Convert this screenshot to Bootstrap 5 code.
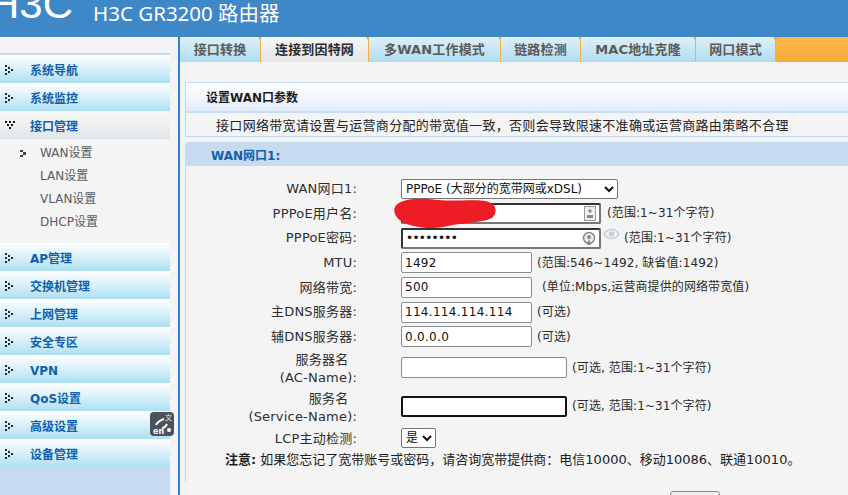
<!DOCTYPE html>
<html lang="zh-CN">
<head>
<meta charset="utf-8">
<title>H3C GR3200</title>
<link href="https://cdn.jsdelivr.net/npm/bootstrap@5.3.0/dist/css/bootstrap.min.css" rel="stylesheet">
<style>
html,body{height:495px;overflow:hidden}
body{background:#f4f4f4;font-family:"DejaVu Sans","Noto Sans CJK SC",sans-serif;font-size:12px;color:#222;position:relative;line-height:1.2}
.topbar{height:37px;background:#3f88c8;color:#fff;overflow:hidden}
.logo-mark{font-family:"Liberation Sans",sans-serif;font-size:40px;line-height:37px;width:84px;margin-left:-11px;margin-top:-14px;transform:scaleX(1.05);transform-origin:left top;font-weight:400}
.product{font-family:"Noto Sans","Noto Sans CJK SC",sans-serif;font-size:20.5px;line-height:25px;margin-top:1px}
.mainrow{height:458px}
.sidebar{width:170px;margin-top:16px;background:#c6dbf0;border-top:2px solid #c6dbf0;height:442px;flex:none}
.menuhead{height:28px;padding-top:4px;background:linear-gradient(#fff,#e4f5fb 35%,#aedff3);color:#0f5fae;font-weight:700;padding-left:30px}
.menuhead.is-open{background:linear-gradient(#f6f6f6,#f0f1f2 45%,#dfe5e9)}
.arrow-ico{position:absolute;left:5px;top:10px}
.sublist{height:104px;background:#f4f4f4;padding:3px 0 0 40px;color:#555c66}
.subitem{height:23px}
.cur-ico{position:absolute;left:-20px;top:8px}
.contentarea{margin-left:8px;border-left:2px solid #2f7fd0;min-width:0}
.tabstrip{height:25px;background:linear-gradient(#fbb84f,#f9ab36)}
.tabitem{background:linear-gradient(#dff0f8,#aedcf0);font-weight:700;color:#5a5a5a;font-size:13px;letter-spacing:.15px;position:relative;border-right:1px solid #f6ad3f;flex:none}
.tabitem.is-current{background:linear-gradient(#f7f7f7,#e3e4e6);color:#2b2b2b}
.tabitem::after{content:"";position:absolute;right:-4px;top:0;border:3px solid transparent;border-top:5px solid #f6ad3f;border-bottom:0}
.w1{width:81px}.w2{width:108px}.w3{width:132px}.w4{width:80px}.w5{width:115px}.w6{width:80px}
.infobox{margin:20px 0 0 5px;border:1px solid #c5dbf2;border-right:0;height:55px}
.infotitle{height:30px;padding-top:2px;background:linear-gradient(#fdfeff,#f2f6fd 55%,#e1ebfa);border-bottom:2px solid #c9dcf3;padding-left:20px;font-weight:700;color:#1c1c1c}
.infotext{padding-left:30px;padding-top:3px;height:23px;color:#222;font-size:13px;letter-spacing:.32px;white-space:nowrap}
.panel{margin:5px 0 0 5px;border:1px solid #c5dbf2;border-right:0;border-bottom:0;border-top-left-radius:4px;height:340px}
.panelhead{height:23px;padding-top:3px;background:#c6dbf0;padding-left:25px;color:#0f5fae;font-weight:700}
.formbody{padding-top:10.3px}
.frow{height:24.7px;white-space:nowrap}
.flabel{width:171px;text-align:right;flex:none;color:#2e2e2e;font-size:13px;letter-spacing:.2px}
.fctl{margin-left:44px;flex:none;position:relative}
.fin{display:block;height:21px;width:131px;border:1px solid #8c8c8c;border-radius:2px;background:#fff;font-family:inherit;font-size:12px;padding:1px 3px;color:#111;letter-spacing:.3px}
.fin.wide{width:166px}
.fin.strong{border:2px solid #111}
.fin.mid{border:2px solid #777;border-left-color:#333;border-top-color:#333;width:200px}
.fin.pw{letter-spacing:-.7px}
.fsel{height:20px;border:1px solid #767676;border-radius:2px;background:#fff;font-family:inherit;font-size:12px;padding:0;color:#111}
.fsel.broad{width:217px}
.fhint{margin-left:5px;color:#2b2b2b;letter-spacing:.1px}
.fhint.gap-a{margin-left:6px}
.fhint.gap-b{margin-left:23px}
.fhint.gap-c{margin-left:10px}
.tallrow{height:37px;line-height:18px}
.tallrow2{height:40px;line-height:18px}
.tallrow .flabel,.tallrow2 .flabel{padding-top:3px}
.notice{margin:1px 0 0 39px;white-space:nowrap;color:#1c1c1c;font-size:13px}
.btnstub{position:absolute;left:670px;top:491px;width:50px;height:20px;border:1px solid #8a8a8a;border-radius:3px;background:#efefef}
.scribble{position:absolute;left:393px;top:197px}
.lang-float{position:absolute;left:150px;top:412px;width:24px;height:24px;border-radius:4px;background:#4a525b}
.fieldico{position:absolute;right:5px;top:3px}
.eyeico{position:absolute;left:202px;top:-1px}
</style>
</head>
<body>
<svg width="0" height="0" class="position-absolute"><defs>
<symbol id="dots-right" viewBox="0 0 9 10"><path d="M0 0h2v2H0zM0 4h2v2H0zM0 8h2v2H0zM3 2h2v2H3zM3 6h2v2H3zM6 4h2v2H6z" fill="#1d2733"/></symbol>
<symbol id="dots-down" viewBox="0 0 11 8"><path d="M0 0h2v2H0zM4 0h2v2H4zM8 0h2v2H8zM2 3h2v2H2zM6 3h2v2H6zM4 6h2v2H4z" fill="#111"/></symbol>
</defs></svg>
<header class="topbar d-flex align-items-start">
  <div class="logo-mark flex-shrink-0">H3C</div>
  <div class="product ms-3 ps-1">H3C GR3200 路由器</div>
</header>
<div class="mainrow d-flex">
  <nav class="sidebar">
    <div class="menuhead d-flex align-items-center position-relative"><svg class="arrow-ico" width="9" height="10"><use href="#dots-right"/></svg>系统导航</div>
    <div class="menuhead d-flex align-items-center position-relative"><svg class="arrow-ico" width="9" height="10"><use href="#dots-right"/></svg>系统监控</div>
    <div class="menuhead is-open d-flex align-items-center position-relative"><svg class="arrow-ico" width="11" height="8"><use href="#dots-down"/></svg>接口管理</div>
    <div class="sublist">
      <div class="subitem d-flex align-items-center position-relative"><svg class="cur-ico" width="7" height="7"><path d="M0 0h3v2H0zM3 2h3v3H3zM0 5h3v2H0z" fill="#3a4450"/></svg>WAN设置</div>
      <div class="subitem d-flex align-items-center">LAN设置</div>
      <div class="subitem d-flex align-items-center">VLAN设置</div>
      <div class="subitem d-flex align-items-center">DHCP设置</div>
    </div>
    <div class="menuhead d-flex align-items-center position-relative"><svg class="arrow-ico" width="9" height="10"><use href="#dots-right"/></svg>AP管理</div>
    <div class="menuhead d-flex align-items-center position-relative"><svg class="arrow-ico" width="9" height="10"><use href="#dots-right"/></svg>交换机管理</div>
    <div class="menuhead d-flex align-items-center position-relative"><svg class="arrow-ico" width="9" height="10"><use href="#dots-right"/></svg>上网管理</div>
    <div class="menuhead d-flex align-items-center position-relative"><svg class="arrow-ico" width="9" height="10"><use href="#dots-right"/></svg>安全专区</div>
    <div class="menuhead d-flex align-items-center position-relative"><svg class="arrow-ico" width="9" height="10"><use href="#dots-right"/></svg>VPN</div>
    <div class="menuhead d-flex align-items-center position-relative"><svg class="arrow-ico" width="9" height="10"><use href="#dots-right"/></svg>QoS设置</div>
    <div class="menuhead d-flex align-items-center position-relative"><svg class="arrow-ico" width="9" height="10"><use href="#dots-right"/></svg>高级设置</div>
    <div class="menuhead d-flex align-items-center position-relative"><svg class="arrow-ico" width="9" height="10"><use href="#dots-right"/></svg>设备管理</div>
  </nav>
  <main class="contentarea flex-grow-1">
    <div class="tabstrip d-flex">
      <div class="tabitem w1 d-flex align-items-center justify-content-center">接口转换</div>
      <div class="tabitem w2 is-current d-flex align-items-center justify-content-center">连接到因特网</div>
      <div class="tabitem w3 d-flex align-items-center justify-content-center">多WAN工作模式</div>
      <div class="tabitem w4 d-flex align-items-center justify-content-center">链路检测</div>
      <div class="tabitem w5 d-flex align-items-center justify-content-center">MAC地址克隆</div>
      <div class="tabitem w6 d-flex align-items-center justify-content-center">网口模式</div>
    </div>
    <section class="infobox">
      <div class="infotitle d-flex align-items-center">设置WAN口参数</div>
      <div class="infotext d-flex align-items-center">接口网络带宽请设置与运营商分配的带宽值一致，否则会导致限速不准确或运营商路由策略不合理</div>
    </section>
    <section class="panel">
      <div class="panelhead d-flex align-items-center">WAN网口1:</div>
      <div class="formbody">
        <div class="frow d-flex align-items-center"><div class="flabel">WAN网口1:</div><div class="fctl"><select class="fsel broad"><option>PPPoE (大部分的宽带网或xDSL)</option></select></div></div>
        <div class="frow d-flex align-items-center"><div class="flabel">PPPoE用户名:</div><div class="fctl"><input class="fin mid" type="text"><svg class="fieldico" width="12" height="15" viewBox="0 0 12 15"><rect x=".5" y=".5" width="11" height="14" fill="#eee" stroke="#999"/><circle cx="6" cy="5" r="1.700" fill="#888"/><path d="M3 12V9h6v3z" fill="#888"/></svg></div><div class="fhint gap-a">(范围:1~31个字符)</div></div>
        <div class="frow d-flex align-items-center"><div class="flabel">PPPoE密码:</div><div class="fctl"><input class="fin mid pw" type="password" value="12345678"><svg class="fieldico" width="14" height="16" viewBox="0 0 14 16"><circle cx="7" cy="7" r="5.500" fill="#eee" stroke="#888" stroke-width="1.500"/><circle cx="7" cy="6" r="2" fill="#888"/><path d="M5 14l2-6 2 6z" fill="#888"/></svg><svg class="eyeico" width="17" height="14" viewBox="0 0 17 14"><path d="M1 7c4-6 11-6 15 0c-4 6-11 6-15 0z" fill="#f4f4f4" stroke="#c3cfd6" stroke-width="1.400"/><circle cx="8.500" cy="7" r="2.800" fill="#c3cfd6"/></svg></div><div class="fhint gap-b">(范围:1~31个字符)</div></div>
        <div class="frow d-flex align-items-center"><div class="flabel">MTU:</div><div class="fctl"><input class="fin" type="text" value="1492"></div><div class="fhint">(范围:546~1492, 缺省值:1492)</div></div>
        <div class="frow d-flex align-items-center"><div class="flabel">网络带宽:</div><div class="fctl"><input class="fin" type="text" value="500"></div><div class="fhint gap-c">(单位:Mbps,运营商提供的网络带宽值)</div></div>
        <div class="frow d-flex align-items-center"><div class="flabel">主DNS服务器:</div><div class="fctl"><input class="fin" type="text" value="114.114.114.114"></div><div class="fhint">(可选)</div></div>
        <div class="frow d-flex align-items-center"><div class="flabel">辅DNS服务器:</div><div class="fctl"><input class="fin" type="text" value="0.0.0.0"></div><div class="fhint">(可选)</div></div>
        <div class="frow tallrow d-flex align-items-center"><div class="flabel">服务器名&nbsp;&nbsp;<br>(AC-Name):</div><div class="fctl"><input class="fin wide" type="text"></div><div class="fhint">(可选, 范围:1~31个字符)</div></div>
        <div class="frow tallrow2 d-flex align-items-center"><div class="flabel">服务名&nbsp;&nbsp;<br>(Service-Name):</div><div class="fctl"><input class="fin wide strong" type="text"></div><div class="fhint">(可选, 范围:1~31个字符)</div></div>
        <div class="frow d-flex align-items-center"><div class="flabel">LCP主动检测:</div><div class="fctl"><select class="fsel"><option>是</option></select></div></div>
        <div class="notice"><b>注意:</b> 如果您忘记了宽带账号或密码，请咨询宽带提供商：电信10000、移动10086、联通10010。</div>
      </div>
    </section>
  </main>
</div>
<div class="btnstub"></div>
<svg class="scribble" width="106" height="34" viewBox="0 0 106 34"><path d="M2 10C6 3 20 0 45 3C65 5 88 1 98 6C104 9 104 17 99 21C90 26 70 25 50 30C35 33 15 29 8 24C2 20 0 14 2 10z" fill="#ee1c25"/></svg>
<div class="lang-float"><svg width="24" height="24" viewBox="0 0 24 24"><path d="M6 13c2-4 5-5 8-6M12 16c3 0 4-2 5-4" fill="none" stroke="#fff" stroke-width="2"/><circle cx="19" cy="18" r="2" fill="#fff"/><text x="3" y="22" font-size="8" fill="#fff" font-weight="700" font-family="DejaVu Sans">en</text><text x="15" y="8" font-size="7" fill="#e6e6e6" font-family="Noto Sans CJK SC">文</text></svg></div>
<script src="https://cdn.jsdelivr.net/npm/bootstrap@5.3.0/dist/js/bootstrap.bundle.min.js"></script>
</body>
</html>
